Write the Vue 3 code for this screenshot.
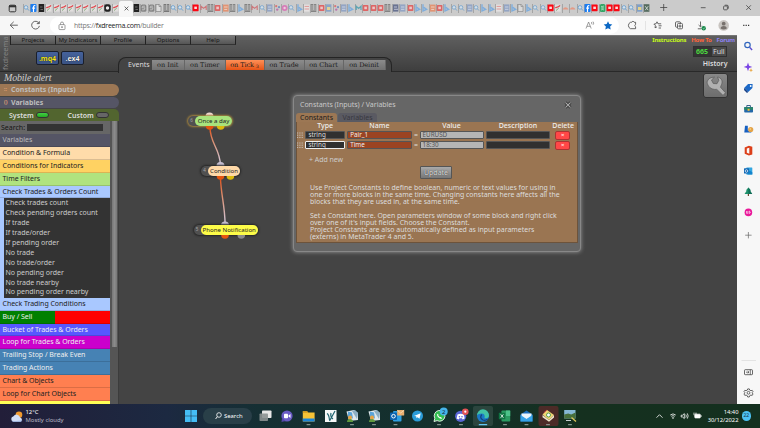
<template>
  <div class="screen">
    <!-- icon sprite -->
    <svg class="sprite" width="0" height="0">
      <symbol id="t-s" viewBox="0 0 7 10"><circle cx="3" cy="4.4" r="1.8" fill="#d5e2ec" stroke="#6fa3d0" stroke-width=".9" /><path d="M4.4 5.8L6 7.6" stroke="#6fa3d0" stroke-width="1" /></symbol>
      <symbol id="t-f" viewBox="0 0 7 10"><rect x=".5" y="1" width="6" height="8" rx="1" fill="#1b7cf0" /><path d="M5.3 2.7C3.9 2.4 3.5 3 3.5 4v5M2.2 5.2h2.9" stroke="#fff" stroke-width="1.2" fill="none" /></symbol>
      <symbol id="t-k" viewBox="0 0 7 10"><rect x=".8" y="1" width="5.4" height="8" fill="#222" /><path d="M2 4h2.5M2.5 6.5h2.5" stroke="#888" stroke-width=".7" /></symbol>
      <symbol id="t-g" viewBox="0 0 7 10"><rect x="1" y="1.6" width="5.6" height="7" fill="#e2dede" /><path d="M1.4 5.2C2.4 3.4 4.2 5 6 2.4" stroke="#e0474d" stroke-width="1.4" fill="none" /><path d="M2 7.6L4.8 5" stroke="#7aa873" stroke-width=".9" /></symbol>
      <symbol id="t-o" viewBox="0 0 7 10"><rect x=".3" y="1.3" width="6.4" height="7.4" rx="2" fill="#222" /><circle cx="3.5" cy="5" r="1.7" fill="#eee" /></symbol>
      <symbol id="t-q" viewBox="0 0 7 10"><rect x=".8" y="1.4" width="5.6" height="7.4" rx="1.5" fill="#858585" /><path d="M5 3.2H2.7L2 4.8h3L4.3 6.8H2" stroke="#ccc" stroke-width=".8" fill="none" /></symbol>
      <symbol id="t-d" viewBox="0 0 7 10"><path d="M1 1.5h3.3L6 3.3v5.2H1z" fill="#ddd" stroke="#777" stroke-width=".6" /><path d="M4 1.5v2h2" stroke="#777" stroke-width=".6" fill="none" /></symbol>
      <symbol id="t-h" viewBox="0 0 7 10"><rect x="1" y="1" width="5.3" height="8" fill="#777" /><path d="M1 3h5.3M1 5h5.3M1 7h5.3M3.6 1v6" stroke="#c2c2c2" stroke-width=".8" /></symbol>
      <symbol id="t-r" viewBox="0 0 7 10"><rect x=".8" y="2" width="5.6" height="6" rx=".8" fill="#df5454" /><rect x="2.3" y="3.6" width="2.6" height="2.6" fill="#f3c6c6" /></symbol>
      <symbol id="t-y" viewBox="0 0 7 10"><rect x=".6" y="1.6" width="6" height="6.6" rx=".6" fill="#fa0713" /><rect x="2.3" y="3.6" width="2.6" height="2.4" fill="#ffd9d9" /></symbol>
      <symbol id="t-b" viewBox="0 0 7 10"><path d="M2 1.2v6.7l3.6-1.6-2.8-1.9" stroke="#72a9e0" stroke-width="1.4" fill="none" /></symbol>
      <symbol id="t-w" viewBox="0 0 7 10"><rect x="1" y="1.4" width="5.4" height="7.2" fill="#8b9fc3" /><path d="M2 4h3.4M2 6.3h3.4" stroke="#dbe3f1" stroke-width=".8" /></symbol>
      <symbol id="t-n" viewBox="0 0 7 10"><rect x="1" y="1.4" width="5.4" height="7.2" fill="#596487" /><path d="M2 4h3M2 6.3h4" stroke="#c6cbe0" stroke-width=".9" /></symbol>
      <symbol id="t-p" viewBox="0 0 7 10"><circle cx="3.6" cy="5" r="3" fill="#d96fb5" /><circle cx="3.6" cy="5" r="1.2" fill="#f3cbe3" /></symbol>
      <symbol id="t-c" viewBox="0 0 7 10"><circle cx="2.2" cy="3.2" r="1.1" fill="#d66" /><circle cx="5" cy="4.2" r="1.1" fill="#68b" /><circle cx="3.2" cy="6.6" r="1.2" fill="#b6a" /></symbol>
      <symbol id="t-m" viewBox="0 0 7 10"><path d="M1 7V3.2l2.6 2.2L6.2 3.2V7" stroke="#d1666b" stroke-width="1.1" fill="none" /></symbol>
      <symbol id="t-t" viewBox="0 0 7 10"><path d="M1.2 7V3.2l2.4 2.2L6 3.2V7" stroke="#4da0b0" stroke-width="1.3" fill="none" /></symbol>
      <symbol id="t-a" viewBox="0 0 7 10"><rect x="1" y="1.6" width="5.6" height="7" fill="#e58b65" /><path d="M2 4h3.6M2.2 6.4h3" stroke="#f6d9c9" stroke-width=".9" /></symbol>
      <symbol id="t-l" viewBox="0 0 7 10"><path d="M.8 6.6C2 3.6 5 3.6 6.4 6.6z" fill="#e49a85" /></symbol>
      <symbol id="t-e" viewBox="0 0 7 10"><rect x="1" y="1.6" width="5.6" height="7" fill="#e9e6e6" /><path d="M1.6 3.4h4.4M1.6 6h4.4" stroke="#de7878" stroke-width=".8" /></symbol>
      <symbol id="t-v" viewBox="0 0 7 10"><rect x=".8" y="1" width="5.6" height="8" rx="1.6" fill="#34a566" /><path d="M2 3.4c3 0 3 3 0 3.6M5 3c-3 1-3 3 0 4" stroke="#bfe6cf" stroke-width=".7" fill="none" /></symbol>
      <symbol id="t-u" viewBox="0 0 7 10"><rect x="1" y="1.3" width="5.4" height="7.4" fill="#7f9fc7" /><path d="M2 4h3.4v3H2z" fill="#e5d38c" /></symbol>
      <symbol id="t-x" viewBox="0 0 7 10"><rect x="1" y="1.2" width="5.4" height="7.6" fill="#556b5f" /><path d="M2.2 3.2l3 4M5.2 3.2l-3 4" stroke="#d0dcd5" stroke-width=".9" /></symbol>
    </svg>

    <!-- browser tabs -->
    <div class="tabbar">
      <svg class="tab-menu" width="9" height="9" viewBox="0 0 9 9"><rect x="1.2" y="1.2" width="6.6" height="6.6" rx="1.3" fill="none" stroke="#333" stroke-width="1" /><path d="M1 2.3h7" stroke="#333" stroke-width="2" /></svg>
      <div class="tabs">
        <span v-for="(kind, i) in leftTabs" :key="'l' + i" class="tab"><svg width="7" height="10"><use :href="'#t-' + kind" /></svg></span>
        <span class="tab-active"><svg width="5" height="5" viewBox="0 0 5 5"><path d="M.6.6l3.800 3.800M4.400.6L.6 4.400" stroke="#333" stroke-width=".7" /></svg></span>
        <span v-for="(kind, i) in rightTabs" :key="'r' + i" class="tab" :class="{ dim: i > 8 && i < 56 }"><svg width="7" height="10"><use :href="'#t-' + kind" /></svg></span>
      </div>
      <svg class="win-controls" width="106" height="16" viewBox="654 0 106 16" fill="none" stroke="#444" stroke-width=".8">
        <path d="M660.200 7.500h7M663.700 4v7" />
        <path d="M700.800 7.700h4.800" />
        <rect x="723.600" y="6" width="3.800" height="3.800" rx=".8" /><path d="M724.800 5.200h2.200q1.300 0 1.300 1.300v2.200" />
        <path d="M746.300 5.300l4.600 4.600M750.900 5.300l-4.600 4.600" />
      </svg>
    </div>

    <!-- browser toolbar -->
    <div class="toolbar">
      <svg class="nav-icons" width="50" height="19" viewBox="0 16 50 19" fill="none" stroke="#555" stroke-width=".9">
        <path d="M10.200 25.200h7.600M13.700 21.800l-3.500 3.400 3.500 3.400" />
        <path d="M39 23.300a3.900 3.900 0 1 0 .4 2.600M39.300 21.200v2.400h-2.500" />
      </svg>
      <div class="address">
        <svg width="8" height="10" viewBox="0 0 8 10" fill="none" stroke="#777" stroke-width=".7"><rect x="1" y="3.600" width="6" height="5" rx=".8" /><path d="M2.500 3.600V2.500a1.500 1.500 0 0 1 3 0v1.100" /><circle cx="4" cy="6.100" r=".5" fill="#777" /></svg>
        <span class="url"><i>https://</i>fxdreema.com<i>/builder</i></span>
        <svg class="read" width="10" height="9" viewBox="0 0 10 9" fill="none" stroke="#777" stroke-width=".7"><path d="M1 7.500L3.600 1l2.600 6.500M1.900 5.300h3.400M6.400 1q1 1 0 2.200M8 .6q1.400 1.600 0 3.200" /></svg>
        <svg width="10" height="9" viewBox="0 0 10 9"><path d="M5 .3l1.300 2.800 3 .4-2.200 2.100.6 3L5 7.200 2.300 8.600l.6-3L.7 3.500l3-.4z" fill="#0c68c4" /></svg>
      </div>
      <svg class="tool-icons" width="141" height="19" viewBox="619 16 141 19" fill="none" stroke="#444" stroke-width=".8">
        <path d="M630.500 22.300h1.200a1.300 1.300 0 0 1 2.500 0h1.400v2.100a1.300 1.300 0 0 0 0 2.400v1.900h-5.100a3.500 3.500 0 0 1 0-6.400" />
        <path d="M645.500 21v9" stroke="#ddd" />
        <path d="M657 21.800l-1 2-2.100.3 1.500 1.500-.4 2.200 2-1M657 21.800l1 2h3.200M658.600 25.800h3M658.600 28h2.400" />
        <rect x="675.500" y="21.800" width="5" height="5.400" rx="1" /><rect x="677.500" y="23.400" width="5" height="5.400" rx="1" fill="#f7f7f7" /><path d="M678.400 26.100h3.200M680 24.500v3.200" />
        <path d="M700.500 21.500v5M698.600 25l1.900 1.900 1.200-1.200M697.800 28.800h3.600" />
        <circle cx="703.700" cy="28.300" r="2.200" fill="#17894a" stroke="none" /><path d="M702.700 28.400l.8.7 1.200-1.500" stroke="#fff" stroke-width=".5" />
        <circle cx="723.700" cy="25.400" r="5.300" fill="#c8c4c0" stroke="none" /><circle cx="723.700" cy="23.700" r="1.900" fill="#77716c" stroke="none" /><path d="M720.600 28.500q0-2.500 3.100-2.500t3.100 2.500q-3.100 1.900-6.200 0z" fill="#77716c" stroke="none" />
        <path d="M743.200 25.400h1.200M745.600 25.400h1.200M748 25.400h1.200" stroke="#333" stroke-width="1.100" />
      </svg>
    </div>

    <div class="content">
      <main class="app">
        <header class="app-header">
          <span class="brand">fxdreema</span>
          <nav class="menu">
            <span v-for="m in menu" :key="m">{{ m }}</span>
          </nav>
          <div class="exports">
            <button class="mq">.mq4</button>
            <button>.ex4</button>
          </div>
          <div class="events">
            <span class="events-label">Events</span>
            <span v-for="e in events" :key="e.label" class="event" :class="{ on: e.on }" :style="{ width: e.w + 'px' }">{{ e.label }}<small v-if="e.on">3</small></span>
          </div>
          <div class="links">
            <div class="top-links"><a class="ins">Instructions</a><a class="how">How To</a><a class="forum">Forum</a></div>
            <div class="counter"><b>665</b><span>Full</span></div>
            <div class="history">History</div>
          </div>
        </header>

        <div class="workspace">
          <aside class="side">
            <div class="project">Mobile alert</div>
            <div class="bar constants"><i>::</i>Constants (Inputs)</div>
            <div class="bar variables"><i>()</i>Variables</div>
            <div class="switches">
              <span>System</span><em class="led on"></em><span class="custom">Custom</span><em class="led"></em>
            </div>
            <div class="library">
              <div class="list">
                <div class="search"><span>Search:</span><div class="search-box"></div></div>
                <template v-for="g in groups" :key="g.label">
                  <div class="group" :class="g.cls"><span>{{ g.label }}</span></div>
                  <ul v-if="g.items" class="items">
                    <li v-for="item in g.items" :key="item">{{ item }}</li>
                  </ul>
                </template>
              </div>
              <div class="scroll"><div class="thumb"></div></div>
            </div>
          </aside>

          <section class="canvas">
            <svg class="wires" width="618" height="332" viewBox="119 72 618 332">
              <defs>
                <linearGradient id="w1" gradientUnits="userSpaceOnUse" x1="210" y1="128" x2="220" y2="165"><stop offset="0" stop-color="#e2511a" /><stop offset=".35" stop-color="#dc8f70" /><stop offset="1" stop-color="#d3cbe0" /></linearGradient>
                <linearGradient id="w2" gradientUnits="userSpaceOnUse" x1="220" y1="178" x2="225" y2="224"><stop offset="0" stop-color="#e2511a" /><stop offset=".4" stop-color="#dc8f70" /><stop offset="1" stop-color="#d3cbe0" /></linearGradient>
              </defs>
              <path d="M210 127c0 17 10 21 10.400 38" stroke="url(#w1)" stroke-width="1.400" fill="none" />
              <path d="M220.400 177c.6 18 4.400 28 4.700 47" stroke="url(#w2)" stroke-width="1.400" fill="none" />
              <g v-for="n in nodes" :key="n.label">
                <circle :cx="n.top[0]" :cy="n.top[1]" r="4" :fill="n.top[2]" />
              </g>
            </svg>
            <div v-for="n in nodes" :key="n.label" class="node" :class="n.cls">
              <i>{{ n.id }}</i><span>{{ n.label }}</span>
            </div>
            <!-- lower half of the output ports, over the node shadow -->
            <svg class="wires" width="618" height="332" viewBox="119 72 618 332">
              <g v-for="n in nodes" :key="n.label">
                <path v-for="p in n.out" :key="p[0]" :d="`M${p[0] - 3.800} ${p[1]}a3.800 3.800 0 0 0 7.600 0z`" :fill="p[2]" />
              </g>
            </svg>

            <div class="wrench">
              <svg width="23" height="23" viewBox="0 0 23 23"><path d="M10.500 3.200L7.500 6l1.800 3.500 3.700.2 1.800-3.400L13.500 3c3.500.6 5.800 3.800 4 7.600l-1 2.600 5 5.600-2.500 2.600-6.200-6C6.500 16 3.500 12 3 8c1-3.500 4-5 7.500-4.800z" fill="#b0b0b0" stroke="#606060" stroke-width=".8" /></svg>
            </div>

            <div class="dialog">
              <div class="dialog-head">
                <span>Constants (Inputs) / Variables</span>
                <svg width="8" height="8" viewBox="0 0 8 8"><path d="M1.500 1.500l5 5M6.500 1.500l-5 5" stroke="#222" stroke-width="2.500" /><path d="M1.500 1.500l5 5M6.500 1.500l-5 5" stroke="#aaa" stroke-width="1.100" /></svg>
              </div>
              <div class="dialog-tabs"><span class="active">Constants</span><span>Variables</span></div>
              <div class="dialog-body">
                <div class="row head">
                  <span></span><span>Type</span><span>Name</span><span></span><span>Value</span><span>Description</span><span>Delete</span>
                </div>
                <div v-for="(r, i) in rows" :key="r.name" class="row">
                  <svg width="6" height="6" viewBox="0 0 6 6"><path d="M0 1h6M0 3.200h6M0 5.400h6" stroke="#ccc" stroke-width=".9" stroke-dasharray="1.200 1.100" /></svg>
                  <span class="field type" :class="{ focus: i === 1 }">{{ r.type }}</span>
                  <span class="field name">{{ r.name }}</span>
                  <span class="eq">=</span>
                  <span class="field value">{{ r.value }}</span>
                  <span class="field desc"></span>
                  <button class="del">×</button>
                </div>
                <div class="add">+ Add new</div>
                <button class="update">Update</button>
                <div class="help">
                  <p v-for="(l, i) in help" :key="i">{{ l }}</p>
                </div>
              </div>
            </div>
          </section>
        </div>
      </main>

      <!-- edge sidebar -->
      <aside class="edge">
        <svg width="23" height="369" viewBox="737 35 23 369" fill="none">
          <circle cx="747.500" cy="45" r="2.700" stroke="#3166bd" stroke-width="1.200" /><path d="M749.600 47.300l2.500 2.700" stroke="#5d4ed0" stroke-width="1.400" />
          <path d="M748 62.500l1.100 3.200 3.200 1.200-3.200 1.100-1.100 3.300-1.100-3.300-3.200-1.100 3.200-1.200z" fill="#7a45e5" /><path d="M751 68.300l.6 1.400 1.400.5-1.400.6-.6 1.400-.6-1.400-1.400-.6 1.400-.5z" fill="#e8a43c" />
          <path d="M744.300 87.800l3.800-3.700 4.500-.2-.2 4.200-4.200 4z" fill="#1c69c7" /><path d="M744.300 87.800l3.900 4.300-1.200.8-3-3z" fill="#143f86" /><circle cx="750.700" cy="86" r=".9" fill="#fff" />
          <rect x="744.200" y="107" width="8.800" height="5.600" rx=".8" fill="#2368a8" /><path d="M744.200 107.200h8.800v2.600h-8.800z" fill="#298668" /><path d="M746.800 107v-1.500h3.600v1.500" stroke="#24507f" stroke-width=".9" /><rect x="747.600" y="108.800" width="2" height="2" fill="#f1bd35" />
          <path d="M745 125.700h2.800v4.800h3.500v2h-7z" fill="#165fc0" /><circle cx="750.700" cy="129.500" r="2.600" fill="#e4a449" /><circle cx="750.300" cy="129" r=".8" fill="#f9dc98" />
          <path d="M748.900 145.700l3.400 1v7.800l-3.400 1-4.200-1.700v-6.300zM749.300 147.800l-2.500.8v4.200l2.500 1z" fill="#dc3f19" fill-rule="evenodd" />
          <rect x="746.300" y="167.500" width="6" height="7" rx=".5" fill="#32a6e0" /><rect x="744" y="168.300" width="5" height="5.300" rx=".6" fill="#1067b5" /><circle cx="746.500" cy="171" r="1.300" stroke="#fff" stroke-width=".7" /><path d="M749.500 170.500l2.800 1.800v2.200h-5" fill="#1384cc" />
          <path d="M748.400 187.500l2.500 3h-1l2.300 3.500h-7.700l2.300-3.500h-1z" fill="#1e916b" /><path d="M748.400 187.500l2.500 3h-1l2.300 3.500h-3.800z" fill="#126d57" /><path d="M748.400 194v1.900" stroke="#6c4d31" stroke-width="1.200" />
          <circle cx="748.400" cy="212.400" r="3.800" fill="#e9199a" /><path d="M746.500 211v2.300h1.300V211M749.300 214v-3l1.200 1.200-1 1" stroke="#fff" stroke-width=".6" />
          <path d="M745.200 235.200h6.400M748.400 232v6.400" stroke="#666" stroke-width=".7" />
          <path d="M741.500 360.500h14.500" stroke="#ddd" stroke-width=".8" />
          <rect x="744.500" y="369.700" width="8" height="5" rx=".7" stroke="#444" stroke-width=".8" /><path d="M750.300 369.700v5M746 372.200h3M747.700 371l1.300 1.200-1.300 1.200" stroke="#444" stroke-width=".7" />
          <circle cx="748.500" cy="392.800" r="1.400" stroke="#444" stroke-width=".8" /><path d="M747.700 388.900h1.600l.4 1.200 1.300.6 1.200-.4.8 1.400-.9 1 .9 1.300-.8 1.400-1.300-.3-1.200.6-.4 1.300h-1.600l-.4-1.300-1.200-.6-1.300.3-.8-1.400.9-1.300-.9-1 .8-1.400 1.200.4 1.300-.6z" stroke="#444" stroke-width=".8" />
        </svg>
      </aside>
    </div>

    <!-- windows taskbar -->
    <footer class="taskbar">
      <div class="weather">
        <svg width="14" height="13" viewBox="0 0 14 13"><circle cx="9" cy="4.700" r="3.300" fill="#f19a2e" /><path d="M3.500 11.800a2.800 2.800 0 0 1 0-5.500 3.600 3.600 0 0 1 6.600 1.200 2.200 2.200 0 0 1 .2 4.300z" fill="#d3def6" /><path d="M1.500 10.700q1 1.100 2 1.100h6.800q1 0 2-1.300-5 .7-10.800.2z" fill="#9cb6e4" /></svg>
        <div><p>12°C</p><p class="soft">Mostly cloudy</p></div>
      </div>
      <svg class="win" width="12" height="12" viewBox="0 0 12 12"><path d="M0 0h5.700v5.700H0zM6.300 0H12v5.700H6.300zM0 6.300h5.700V12H0zM6.300 6.300H12V12H6.300z" fill="#45bdf5" /></svg>
      <div class="find"><svg width="7" height="8" viewBox="0 0 7 8"><circle cx="4" cy="3" r="2.300" fill="none" stroke="#fff" stroke-width=".8" /><path d="M2.300 4.700L.6 7" stroke="#fff" stroke-width=".9" /></svg>Search</div>
      <svg class="tasks" width="326" height="24" viewBox="254 404 326 24" fill="none">
        <rect x="262" y="410.500" width="9.500" height="7.500" rx=".8" fill="#e8e8e8" /><rect x="259.500" y="413.500" width="8.500" height="7.500" rx=".8" fill="#8c9292" opacity=".9" />
        <circle cx="287" cy="416" r="5.600" fill="#6a5bc4" /><path d="M282 418l-.5 4 4-1" fill="#5547aa" /><rect x="284" y="413.700" width="4" height="4.600" rx=".8" fill="#fff" /><path d="M288.500 415.500l2-1.400v3.800l-2-1.400z" fill="#fff" />
        <path d="M302.800 411.300h4.300l1.200 1.200h6.300v9h-11.800z" fill="#f5c336" /><path d="M302.800 418.500h11.800v3h-11.800z" fill="#1b84d8" /><path d="M302.800 411.300h4.300l1 1.500h-5.300z" fill="#d4981c" />
        <rect x="325" y="410" width="11.500" height="12" fill="#f5f8f8" /><path d="M327 413.500q2 1 2.500 6.500M331 413q-1 4 2 6M329.500 421l5.500-10" stroke="#1f6470" stroke-width="1.200" />
        <g v-for="x in [352, 374]" :key="x" :transform="`translate(${x} 416)`">
          <path d="M-5.500-4.500L2-6l4 3v7l-9 1z" fill="#dfe8ed" /><path d="M-4-4.500l4 1 1 6-5-1z" fill="#5ba4d9" /><path d="M0-5l5 8 1-6-3-3z" fill="#8dafc4" /><circle cx="-2" cy="1.500" r="2" fill="#e9a342" /><path d="M-5 6q0-3 3-3t3 3z" fill="#5f983d" />
        </g>
        <rect x="393" y="411" width="8.500" height="10.500" rx="1" fill="#2f9fe2" /><rect x="390" y="412.500" width="7" height="7.500" rx=".8" fill="#0d61ad" /><circle cx="393.500" cy="416.200" r="1.800" stroke="#fff" stroke-width="1" /><rect x="397.200" y="410" width="7" height="5.400" rx=".5" fill="#e8ae70" /><path d="M397.300 410.300l3.400 2.700 3.400-2.700" stroke="#fbe8c8" stroke-width=".7" />
        <circle cx="417.500" cy="416" r="5.500" fill="#2b9cd8" /><path d="M414 416l6.700-2.800-1.200 5.500-2-1.400-1 1-.3-2z" fill="#fff" />
        <path d="M434 421.500l.8-3.200a5.400 5.400 0 1 1 2.300 2.300z" fill="#33bd50" stroke="#eef6ef" stroke-width=".9" /><path d="M437.300 413.700q-.8 2.500 1.800 4.300 1.800 1.300 3 .2l-1.300-1.300-1 .4-1.600-1.700.3-1z" fill="#fff" />
        <circle cx="443.700" cy="411.500" r="4" fill="#46b4ea" /><text x="443.700" y="413.600" class="badge-text">2</text>
        <circle cx="460.700" cy="416.300" r="5.600" fill="#5865d4" /><path d="M457.500 414.500q3.200-1.500 6.400 0l.8 4-2 1-.8-1.200h-2.500l-.8 1.200-2-1z" fill="#fff" /><circle cx="459.400" cy="416.800" r=".8" fill="#5865d4" /><circle cx="462" cy="416.800" r=".8" fill="#5865d4" /><circle cx="465.300" cy="411.700" r="3.300" fill="#e25356" /><circle cx="465.300" cy="411.700" r="1.100" fill="#fff" />
        <rect x="473" y="406" width="20" height="20" rx="2" fill="#fff" opacity=".1" />
        <circle cx="483" cy="416" r="6" fill="#1a79c8" /><path d="M477 415.500a6 6 0 0 1 12-.3c.1 2.700-2.500 3.400-4.500 2.700.8-2.700-.3-4.500-3-4.500-2 0-3.700.8-4.500 2.100z" fill="#42c2a6" /><path d="M481.700 414.500q-2.500 3.500 1.300 5.500 2 .9 4.600-.7" stroke="#14427c" stroke-width="1.300" />
        <rect x="501.500" y="410.500" width="8.700" height="11" rx=".8" fill="#2b9c62" /><path d="M506 410.500h4.200v5.500H506z" fill="#4cc28a" /><rect x="498.800" y="412.800" width="6.500" height="6.500" rx=".6" fill="#107443" /><path d="M500.700 414.300l2.700 3.500M503.400 414.300l-2.700 3.500" stroke="#fff" stroke-width=".8" />
        <path d="M520.500 414.500l6-4 6 4v7h-12z" fill="#1c6fbe" /><path d="M521.500 413.500h10v3l-5 3-5-3z" fill="#eaf5fc" /><path d="M520.500 415l6 4 6-4v6.500h-12z" fill="#35a3e8" />
        <rect x="538.500" y="406" width="20" height="20" rx="2" fill="#b82435" opacity=".34" />
        <path d="M542.500 414.500l4.500-4.500 7 5-5 5z" fill="#efd574" /><path d="M542.500 415l6.500 5 5-5v2.500l-5 4.200-6.500-4.500z" fill="#eee7cd" /><circle cx="548.500" cy="415" r="2" fill="#fff" stroke="#4c9c43" stroke-width=".9" /><path d="M543.800 412.800l3.200-2.800" stroke="#d9544c" stroke-width="1" />
        <rect x="564.200" y="410" width="11.300" height="8.500" fill="#86b9d6" /><path d="M564.200 414.500l4-1 3 1 4.300-2v6h-11.300z" fill="#476f3b" /><path d="M566 420.500h5" stroke="#c7d0d0" stroke-width="1" /><path d="M571.500 417.500l4.500 4" stroke="#ddc95b" stroke-width="1.300" />
        <path v-for="x in [308.500, 352, 374, 395.500, 439, 461, 505, 526.500, 548, 570]" :key="'u' + x" :d="`M${x - 1.500} 424.700h3`" stroke="#9aa9a4" stroke-width="1" stroke-linecap="round" />
        <path d="M479.300 424.700h7.400" stroke="#63c8f5" stroke-width="1.200" stroke-linecap="round" />
      </svg>
      <div class="tray">
        <svg width="50" height="12" viewBox="655 410 50 12" fill="none" stroke="#fff" stroke-width=".8">
          <path d="M656.500 417.700l3-3 3 3" />
          <path d="M670.300 415q2.700-2.200 5.400 0M671.300 416.300q1.700-1.300 3.400 0" /><path d="M673 419l-1.300-1.600h2.600z" fill="#fff" stroke="none" />
          <path d="M681.200 415.200h1.400l1.700-1.600v5l-1.700-1.600h-1.400zM685.800 414.500q1 1.500 0 3.200M687.300 413.400q1.700 2.500 0 5.200" />
          <rect x="694.800" y="414.200" width="5.500" height="3.700" rx=".6" fill="#fff" /><path d="M701.200 415.300v1.500M694 412.600v2.600M696 412.600v2" />
        </svg>
        <div class="clock"><p>14:40</p><p>30/12/2022</p></div>
        <span class="count">22</span>
      </div>
    </footer>
  </div>
</template>

<script setup>
// one letter per pinned favicon, see the sprite
const leftTabs = 'sfkggggggggog'.split('')
const rightTabs = (
  'kqqdhsssymhrahbh' + 'mswcpsbehruc' + 'wbtrrrhnwrbb' + 'arbsswsbbew' + 'bdbssyglls' + 'fyvyyssux'
).split('')

const menu = ['Projects', 'My Indicators', 'Profile', 'Options', 'Help']

const events = [
  { label: 'on Init', w: 33.5 },
  { label: 'on Timer', w: 40.5 },
  { label: 'on Tick', w: 39, on: true },
  { label: 'on Trade', w: 40 },
  { label: 'on Chart', w: 39 },
  { label: 'on Deinit', w: 42 }
]

const groups = [
  { label: 'Variables', cls: 'g-vars' },
  { label: 'Condition & Formula', cls: 'g-cond' },
  { label: 'Conditions for Indicators', cls: 'g-ind' },
  { label: 'Time Filters', cls: 'g-time' },
  {
    label: 'Check Trades & Orders Count',
    cls: 'g-check',
    items: [
      'Check trades count',
      'Check pending orders count',
      'If trade',
      'If trade/order',
      'If pending order',
      'No trade',
      'No trade/order',
      'No pending order',
      'No trade nearby',
      'No pending order nearby'
    ]
  },
  { label: 'Check Trading Conditions', cls: 'g-check' },
  { label: 'Buy / Sell', cls: 'g-buy' },
  { label: 'Bucket of Trades & Orders', cls: 'g-bucket' },
  { label: 'Loop for Trades & Orders', cls: 'g-loop' },
  { label: 'Trailing Stop / Break Even', cls: 'g-trail' },
  { label: 'Trading Actions', cls: 'g-trail' },
  { label: 'Chart & Objects', cls: 'g-chart' },
  { label: 'Loop for Chart Objects', cls: 'g-chart' },
  { label: 'Output & Communication', cls: 'g-out' }
]

const nodes = [
  { id: 6, label: 'Once a day', cls: 'n1', top: [209.5, 116.5, '#f3dcd6'], out: [[209.7, 126, '#e5550f'], [220.7, 126, '#dcba0c']] },
  { id: 4, label: 'Condition', cls: 'n2', top: [220.5, 166, '#cbc3d6'], out: [[220.5, 176, '#e5550f'], [230.4, 176, '#dcba0c']] },
  { id: 5, label: 'Phone Notification', cls: 'n3', top: [225, 225.5, '#cbc3d6'], out: [[225, 235, '#e5550f'], [241.3, 235, '#8b8b8b']] }
]

const rows = [
  { type: 'string', name: 'Pair_1', value: 'EURUSD' },
  { type: 'string', name: 'Time', value: '18:30' }
]

const help = [
  'Use Project Constants to define boolean, numeric or text values for using in',
  'one or more blocks in the same time. Changing constants here affects all the',
  'blocks that they are used in, at the same time.',
  '',
  'Set a Constant here. Open parameters window of some block and right click',
  "over one of it's input fields. Choose the Constant.",
  'Project Constants are also automatically defined as input parameters',
  '(externs) in MetaTrader 4 and 5.'
]
</script>

<style>
body {
  margin: 0;
  overflow: hidden;
}
</style>

<style scoped>
.screen {
  width: 760px;
  height: 428px;
  display: flex;
  flex-direction: column;
  overflow: hidden;
  font-family: "Noto Sans", sans-serif;
  background: #444;
}

.screen * {
  box-sizing: border-box;
}

p, ul {
  margin: 0;
  padding: 0;
}

button {
  font-family: inherit;
  padding: 0;
}

svg {
  display: block;
  flex: none;
}

.sprite {
  position: absolute;
}

/* browser tabs */
.tabbar {
  height: 16px;
  flex: none;
  display: flex;
  background: #cbcbcb;
}

.tab-menu {
  margin: 4px 0 0 8px;
}

.tabs {
  display: flex;
  margin-left: 6px;
  width: 631px;
}

.tab {
  flex: 0 0 7.4px;
  height: 16px;
  padding-top: 3px;
  background: linear-gradient(#9b9b9b, #9b9b9b) 0 4px / 0.8px 9px no-repeat;
}

.tab.dim svg {
  opacity: 0.85;
}

.tab-active {
  flex: 0 0 14px;
  display: flex;
  align-items: center;
  justify-content: center;
  margin-top: 1px;
  background: #f7f7f7;
  border-radius: 2px 2px 0 0;
}

/* browser toolbar */
.toolbar {
  height: 19px;
  flex: none;
  display: flex;
  background: #f7f7f7;
}

.address {
  display: flex;
  align-items: center;
  width: 569px;
  height: 17px;
  margin-top: 1px;
  padding-left: 8px;
  padding-right: 6px;
  border-radius: 9px;
  background: #fff;
}

.url {
  margin-left: 8px;
  font-family: "Open Sans", sans-serif;
  font-size: 7px;
  letter-spacing: -0.26px;
  color: #222;
}

.url i {
  font-style: normal;
  color: #777;
}

.read {
  margin-left: auto;
  margin-right: 8px;
}

/* app */
.content {
  height: 369px;
  flex: none;
  display: flex;
}

.app {
  width: 737px;
  display: flex;
  flex-direction: column;
}

.app-header {
  position: relative;
  height: 37px;
  flex: none;
  display: flex;
  background: linear-gradient(#5f5f5f, #3e3e3e);
  border-top: 1px solid #777;
  border-bottom: 1px solid #292929;
}

.brand {
  position: absolute;
  left: 0;
  top: 0;
  height: 34px;
  writing-mode: vertical-rl;
  transform: rotate(180deg);
  font-size: 7.5px;
  line-height: 10px;
  color: #858585;
}

.menu {
  position: absolute;
  left: 10px;
  top: 0;
  display: flex;
  height: 9px;
  border-left: 1px solid #222;
}

.menu span {
  width: 45px;
  border-right: 1px solid #222;
  border-bottom: 1px solid #333;
  background: linear-gradient(#777, #555);
  color: #161616;
  font-size: 6.1px;
  line-height: 8px;
  text-align: center;
}

.exports {
  display: flex;
  gap: 2px;
  margin: 15px 0 0 36px;
}

.exports button {
  width: 23px;
  height: 14px;
  border: 1px solid #1a1f2c;
  border-radius: 2px;
  background: linear-gradient(#45629c, #3a5384);
  color: #f0f0f0;
  font-size: 7px;
  font-weight: 700;
  line-height: 11px;
  text-shadow: 0 0 1px #000;
}

.exports .mq {
  color: #f4e41c;
}

.events {
  display: flex;
  width: 274px;
  height: 16px;
  margin: 21px 0 0 34px;
  padding: 2px 0 0 9px;
  background: #444;
  border: 1px solid #242424;
  border-bottom: 0;
  border-radius: 8px 8px 0 0;
}

.events-label {
  width: 23.5px;
  font-size: 7px;
  line-height: 10px;
  color: #ddd;
}

.event {
  height: 10px;
  border-right: 1px solid #666;
  background: linear-gradient(#8c8c8c, #717171);
  color: #1c1c1c;
  font-family: "DejaVu Serif", serif;
  font-size: 6.5px;
  line-height: 11px;
  letter-spacing: -0.05px;
  text-align: center;
  white-space: nowrap;
}

.event.on {
  background: linear-gradient(#ff9057, #e65417);
}

.event small {
  font-size: 4.5px;
  margin-left: 2px;
  vertical-align: -1px;
}

.links {
  margin-left: auto;
  display: flex;
  flex-direction: column;
  align-items: flex-end;
}

.top-links {
  display: flex;
  gap: 5px;
  padding-right: 2px;
  font-size: 6px;
  font-weight: 700;
  letter-spacing: -0.22px;
  line-height: 8px;
}

.ins {
  color: #c6fb19;
}

.how {
  color: #ff6438;
}

.forum {
  color: #8f83f5;
}

.counter {
  display: flex;
  align-items: center;
  gap: 5px;
  height: 11px;
  width: 34px;
  margin: 2px 10px 0 0;
  padding-left: 2px;
  border: 1px solid #303030;
  background: linear-gradient(90deg, #333 18px, #4b4b4b 18px);
  font-size: 7px;
  line-height: 9px;
  color: #ddd;
}

.counter b {
  color: #4cd640;
}

.history {
  margin: 3px 9.5px 0 0;
  font-size: 7px;
  font-weight: 600;
  line-height: 8px;
  color: #ddd;
}

.workspace {
  display: flex;
  height: 332px;
}

/* left panel */
.side {
  width: 119px;
  flex: none;
  display: flex;
  flex-direction: column;
  white-space: nowrap;
}

.project {
  height: 12px;
  padding-left: 4px;
  font-family: "Liberation Serif", serif;
  font-style: italic;
  font-size: 10px;
  letter-spacing: -0.2px;
  line-height: 11px;
  color: #ccc;
}

.bar {
  display: flex;
  height: 11.5px;
  margin-bottom: 1px;
  border-radius: 0 6px 6px 0;
  font-size: 7px;
  font-weight: 700;
  line-height: 11.5px;
  color: #bdbdbd;
}

.bar i {
  width: 7px;
  margin-left: 4px;
  font-style: normal;
  font-size: 5px;
  color: #e3a377;
}

.constants {
  background: #9c7754;
}

.variables {
  background: #555565;
}

.switches {
  display: flex;
  align-items: center;
  height: 12px;
  padding-left: 9px;
  background: #52652f;
  border-radius: 0 5px 0 0;
  font-size: 7px;
  font-weight: 600;
  color: #ddd;
}

.switches span {
  width: 27px;
}

.switches .custom {
  width: 28.5px;
  margin-left: 19px;
}

.led {
  width: 12.5px;
  height: 6px;
  border-radius: 3px;
  border: 0.5px solid #333;
  background: #666;
}

.led.on {
  background: linear-gradient(#4c4, #2a2);
}

.library {
  display: flex;
  height: 283px;
  overflow: hidden;
}

.list {
  width: 110px;
  height: 283px;
  background: #666;
}

.search {
  display: flex;
  align-items: center;
  height: 13px;
  padding-left: 1px;
  font-size: 7px;
  color: #161616;
}

.search span {
  width: 26px;
}

.search-box {
  width: 75.5px;
  height: 7.5px;
  background: #333;
}

.group {
  height: 12.9px;
  padding-left: 2.5px;
  border-bottom: 1px solid rgba(0, 0, 0, 0.14);
  font-size: 7px;
  letter-spacing: -0.03px;
  line-height: 12px;
  color: #222;
}

.g-vars { background: #555565; color: #bbb; }
.g-cond { background: #ffdcaa; }
.g-ind { background: #ffd262; }
.g-time { background: #b0e37f; }
.g-check { background: #a9c8ff; }
.g-buy { background: linear-gradient(90deg, #008000 50%, #f00 50%); color: #eee; }
.g-bucket { background: #5757ff; color: #eee; }
.g-loop { background: #cb00cc; color: #eee; }
.g-trail { background: #4682b4; color: #eee; }
.g-chart { background: #ff7f50; }
.g-out { background: #ffff55; }

.items {
  height: 99.3px;
  padding-left: 1.5px;
  border-left: 4px solid #a9c8ff;
  background: #333;
  list-style: none;
  font-size: 7px;
  letter-spacing: -0.02px;
  color: #ccc;
}

.items li {
  height: 9.9px;
  line-height: 9.5px;
}

.scroll {
  width: 9px;
  padding-left: 1.5px;
  background: #555;
  border-right: 1px solid #3c3c3c;
}

.thumb {
  width: 5.5px;
  height: 226px;
  background: linear-gradient(90deg, #777, #8b8b8b, #777);
}

/* canvas */
.canvas {
  position: relative;
  flex: 1;
  background: #444;
}

.wires {
  position: absolute;
  left: 0;
  top: 0;
}

.node {
  position: absolute;
  display: flex;
  height: 10px;
  border-radius: 5px;
  background: #505050;
  box-shadow: 0 0 2px 1px #262626;
  font-size: 6.1px;
  line-height: 9.5px;
  white-space: nowrap;
  color: #222;
}

.node i {
  width: 7px;
  font-style: normal;
  font-size: 4.5px;
  text-align: center;
  color: #aaa;
}

.node span {
  flex: 1;
  border-radius: 5px;
  text-align: center;
}

.n1 { left: 69px; top: 44px; width: 44px; box-shadow: 0 0 2px 1px #a5843c; }
.n1 span { background: #a9e37c; }
.n2 { left: 82px; top: 94px; width: 39px; }
.n2 span { background: #ffd9a8; }
.n3 { left: 74.5px; top: 153px; width: 64.5px; }
.n3 span { background: #fdfc48; }

.wrench {
  position: absolute;
  left: 585px;
  top: 2px;
  width: 23px;
  height: 23px;
  overflow: hidden;
  border-radius: 2px;
  background: linear-gradient(#888, #6d6d6d);
  box-shadow: 0 0 0 0.5px #222;
}

.dialog {
  position: absolute;
  left: 174px;
  top: 23px;
  width: 288px;
  height: 157px;
  padding: 0 2px;
  border: 1.5px solid #888;
  border-radius: 4px;
  background: #666;
  box-shadow: 0 0 4px #999;
}

.dialog-head {
  display: flex;
  justify-content: space-between;
  align-items: center;
  height: 17px;
  padding: 0 6px 0 4px;
  font-size: 7px;
  letter-spacing: -0.03px;
  color: #c8c8c8;
}

.dialog-tabs {
  display: flex;
  gap: 1px;
  height: 9px;
  font-size: 7px;
  line-height: 9.5px;
  text-align: center;
  color: #383840;
}

.dialog-tabs span {
  width: 39px;
  border-radius: 3px 3px 0 0;
  background: #5a5a62;
}

.dialog-tabs .active {
  width: 41px;
  background: #9c7754;
  color: #1c1c1c;
}

.dialog-body {
  height: 120.5px;
  background: #9a7552;
  border: 1px solid #6d533b;
  border-top: 0;
}

.row {
  display: grid;
  grid-template-columns: 6.1px 39.3px 64.4px 3.2px 64px 64px 20px;
  column-gap: 2.4px;
  height: 10px;
  align-items: center;
}

.row.head {
  height: 8px;
  font-size: 7px;
  font-weight: 500;
  line-height: 8px;
  color: #eee;
  text-align: center;
  white-space: nowrap;
}

.eq {
  font-size: 7px;
  line-height: 8px;
  color: #ddd;
}

.field {
  height: 8px;
  padding-left: 2px;
  border: 0.5px solid #555;
  border-radius: 1px;
  font-size: 6.3px;
  line-height: 5.5px;
}

.type { background: #303030; color: #ddd; }
.type.focus { border-color: #eee; }
.name { background: #9b4422; color: #eee; }
.value { background: #b5b5b5; color: #555; }
.desc { background: #303030; }

.del {
  width: 15.5px;
  height: 9px;
  margin-left: 2.6px;
  border: 0.5px solid #a33;
  border-radius: 2px;
  background: #ff4747;
  color: #fff;
  font-size: 6px;
  line-height: 7px;
}

.add {
  margin: 5px 0 0 12px;
  font-size: 7px;
  letter-spacing: -0.05px;
  line-height: 10px;
  color: #ccc;
}

.update {
  display: block;
  width: 32px;
  height: 13px;
  margin: 1px 0 0 123px;
  border: 1px solid #555;
  border-radius: 1px;
  background: linear-gradient(#aaa, #777);
  color: #ddd;
  font-size: 7px;
  line-height: 11px;
  text-shadow: 0 0 1px #222;
}

.help {
  margin: 5px 0 0 13px;
  font-size: 6.95px;
  line-height: 7px;
  color: #ddd;
  white-space: nowrap;
}

.help p {
  height: 7px;
}

.edge {
  width: 23px;
  background: #f7f7f7;
}

/* taskbar */
.taskbar {
  position: relative;
  height: 24px;
  flex: none;
  display: flex;
  align-items: center;
  background: linear-gradient(90deg, #221e39, #1c2941 22%, #152f33 34%, #14302b 60%, #15301f 75%, #14301f);
  color: #fff;
}

.weather {
  display: flex;
  align-items: center;
  gap: 2px;
  width: 175px;
  padding-left: 9.5px;
  font-size: 5.9px;
  line-height: 8px;
}

.weather .soft {
  color: #b9b9c4;
}

.win {
  margin-left: 9.5px;
}

.find {
  display: flex;
  align-items: center;
  gap: 2px;
  width: 49px;
  height: 16px;
  margin: 0 2px 0 6.5px;
  padding-left: 12px;
  border-radius: 8px;
  background: #293f48;
  font-size: 5.9px;
}

.badge-text {
  fill: #102a38;
  font-size: 6px;
  text-anchor: middle;
}

.tray {
  display: flex;
  align-items: center;
  margin-left: auto;
  padding-right: 9px;
}

.clock {
  width: 34px;
  font-size: 5.8px;
  line-height: 8px;
  text-align: right;
}

.count {
  width: 9.5px;
  height: 9.5px;
  margin-left: 3px;
  border-radius: 50%;
  background: #4cc2f5;
  color: #163348;
  font-size: 5px;
  line-height: 9px;
  text-align: center;
}
</style>
